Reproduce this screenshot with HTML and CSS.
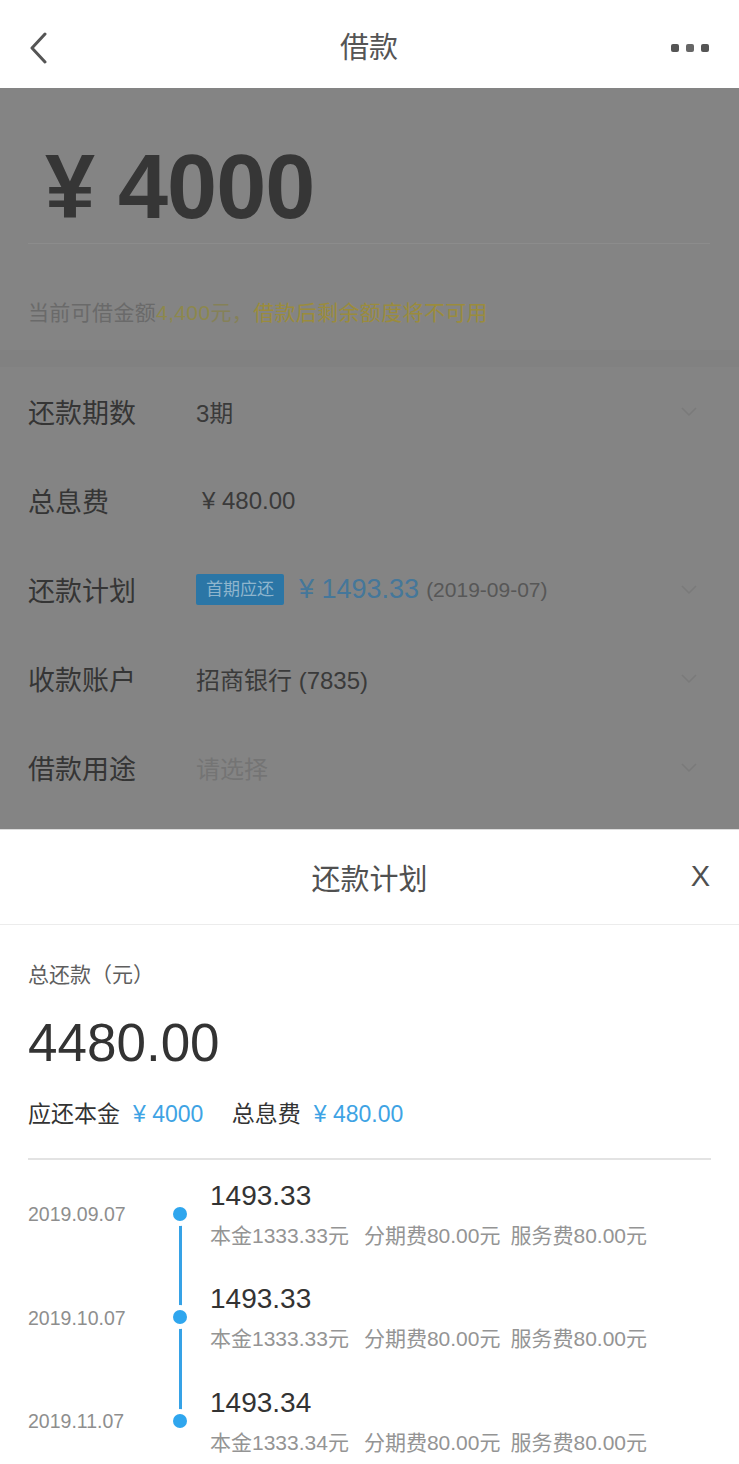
FILE: index.html
```html
<!DOCTYPE html>
<html lang="zh-CN">
<head>
<meta charset="utf-8">
<title>借款</title>
<link rel="stylesheet" href="styles.css">
</head>
<body>
<div class="page">
  <header class="nav">
    <svg class="nav-back" width="22" height="32" viewBox="0 0 22 32"><path d="M17 2 L4 16 L17 30" fill="none" stroke="#555" stroke-width="3" stroke-linecap="round" stroke-linejoin="round"/></svg>
    <div class="nav-title">借款</div>
    <svg class="nav-more" width="38" height="8" viewBox="0 0 38 8"><rect x="0" y="0" width="8" height="8" rx="2" fill="#555"/><rect x="15" y="0" width="8" height="8" rx="2" fill="#666"/><rect x="30" y="0" width="8" height="8" rx="2" fill="#555"/></svg>
  </header>

  <section class="dim">
    <div class="amount-sec">
      <div class="amount">¥ 4000</div>
      <div class="amount-line"></div>
      <div class="tip"><span class="tip-gray">当前可借金额</span><span class="tip-num">4,400</span><span class="tip-mid">元，</span><span class="tip-warn">借款后剩余额度将不可用</span></div>
    </div>
    <div class="band"></div>
    <div class="rows">
      <div class="row">
        <div class="row-label">还款期数</div>
        <div class="row-value">3期</div>
        <svg class="row-arrow" width="16" height="10" viewBox="0 0 16 10"><path d="M1 1 L8 8 L15 1" fill="none" stroke="#7a7a7a" stroke-width="1.5"/></svg>
      </div>
      <div class="row">
        <div class="row-label">总息费</div>
        <div class="row-value row-fee">¥ 480.00</div>
      </div>
      <div class="row">
        <div class="row-label">还款计划</div>
        <div class="row-value plan">
          <span class="badge">首期应还</span>
          <span class="plan-amt">¥ 1493.33</span>
          <span class="plan-date">(2019-09-07)</span>
        </div>
        <svg class="row-arrow" width="16" height="10" viewBox="0 0 16 10"><path d="M1 1 L8 8 L15 1" fill="none" stroke="#7a7a7a" stroke-width="1.5"/></svg>
      </div>
      <div class="row">
        <div class="row-label">收款账户</div>
        <div class="row-value">招商银行 (7835)</div>
        <svg class="row-arrow" width="16" height="10" viewBox="0 0 16 10"><path d="M1 1 L8 8 L15 1" fill="none" stroke="#7a7a7a" stroke-width="1.5"/></svg>
      </div>
      <div class="row">
        <div class="row-label">借款用途</div>
        <div class="row-value placeholder">请选择</div>
        <svg class="row-arrow" width="16" height="10" viewBox="0 0 16 10"><path d="M1 1 L8 8 L15 1" fill="none" stroke="#7a7a7a" stroke-width="1.5"/></svg>
      </div>
    </div>
  </section>

  <section class="sheet">
    <div class="sheet-head">
      <div class="sheet-title">还款计划</div>
      <div class="sheet-close">X</div>
    </div>
    <div class="sheet-body">
      <div class="total-label">总还款（元）</div>
      <div class="total">4480.00</div>
      <div class="summary">
        <span class="sum-label">应还本金</span><span class="sum-val">¥ 4000</span>
        <span class="sum-label sum-gap">总息费</span><span class="sum-val">¥ 480.00</span>
      </div>
      <div class="divider"></div>
      <div class="timeline">
        <div class="item first">
          <div class="date">2019.09.07</div>
          <div class="axis"><span class="dot"></span></div>
          <div class="content">
            <div class="pay">1493.33</div>
            <div class="detail"><span>本金1333.33元</span><span class="d2">分期费80.00元</span><span class="d3">服务费80.00元</span></div>
          </div>
        </div>
        <div class="item">
          <div class="date">2019.10.07</div>
          <div class="axis"><span class="dot"></span></div>
          <div class="content">
            <div class="pay">1493.33</div>
            <div class="detail"><span>本金1333.33元</span><span class="d2">分期费80.00元</span><span class="d3">服务费80.00元</span></div>
          </div>
        </div>
        <div class="item last">
          <div class="date">2019.11.07</div>
          <div class="axis"><span class="dot"></span></div>
          <div class="content">
            <div class="pay">1493.34</div>
            <div class="detail"><span>本金1333.34元</span><span class="d2">分期费80.00元</span><span class="d3">服务费80.00元</span></div>
          </div>
        </div>
      </div>
    </div>
  </section>
</div>
</body>
</html>
```

FILE: styles.css
```css
* { box-sizing: border-box; }
html, body {
  margin: 0;
  padding: 0;
  background: #fff;
}
body {
  font-family: "Liberation Sans", "Noto Sans CJK SC", sans-serif;
  width: 739px;
  height: 1464px;
  overflow: hidden;
}
.page {
  display: flex;
  flex-direction: column;
  width: 739px;
  height: 1464px;
}

/* nav */
.nav {
  height: 88px;
  flex: none;
  display: flex;
  align-items: center;
  justify-content: space-between;
  padding: 8px 30px 0 28px;
  background: #fff;
}
.nav-back { display: block; }
.nav-title {
  font-size: 29px;
  color: #555;
  line-height: 1;
  margin-left: 17px;
}
.nav-more { display: block; }

/* dimmed form */
.dim {
  flex: none;
  height: 741px;
  background: #848484;
  display: flex;
  flex-direction: column;
}
.amount-sec {
  height: 262px;
  flex: none;
  padding: 54px 29px 0 28px;
}
.amount {
  font-size: 90px;
  font-weight: bold;
  line-height: 1;
  letter-spacing: -1px;
  color: #363636;
  padding-left: 17px;
}
.amount-line {
  margin-top: 11px;
  height: 1px;
  background: #8c8c8c;
}
.tip {
  margin-top: 55px;
  font-size: 21px;
  line-height: 28px;
  letter-spacing: 0.35px;
  white-space: nowrap;
}
.tip-gray { color: #6a6a6a; }
.tip-num { color: #8d884c; }
.tip-mid { color: #858158; }
.tip-warn { color: #9b8c3c; }
.band {
  height: 17px;
  flex: none;
  background: #818181;
}
.rows {
  display: flex;
  flex-direction: column;
}
.row {
  height: 89px;
  display: flex;
  align-items: center;
  padding: 0 42px 0 28px;
}
.row-label {
  width: 168px;
  flex: none;
  font-size: 27px;
  color: #353535;
}
.row-value {
  flex: 1;
  font-size: 24px;
  color: #3a3a3a;
  white-space: nowrap;
}
.row-fee { padding-left: 6px; }
.placeholder { color: #747474; }
.row-arrow { flex: none; display: block; }
.plan {
  display: flex;
  align-items: center;
}
.badge {
  display: inline-block;
  background: #2b76a6;
  color: #8fb5cd;
  font-size: 17px;
  line-height: 31px;
  height: 31px;
  padding: 0 10px;
  border-radius: 2px;
}
.plan-amt {
  margin-left: 15px;
  font-size: 27px;
  color: #45779a;
}
.plan-date {
  margin-left: 7px;
  font-size: 21px;
  color: #575757;
}

/* sheet */
.sheet {
  flex: 1;
  background: #fff;
  border-top: 1px solid #dcdcdc;
  display: flex;
  flex-direction: column;
}
.sheet-head {
  height: 95px;
  flex: none;
  display: flex;
  align-items: center;
  justify-content: center;
  position: relative;
  border-bottom: 1px solid #ececec;
}
.sheet-title {
  font-size: 29px;
  color: #505050;
}
.sheet-close {
  position: absolute;
  right: 29px;
  top: 32px;
  font-size: 29px;
  color: #505050;
  line-height: 1;
}
.sheet-body {
  padding: 0 28px;
}
.total-label {
  margin-top: 36px;
  font-size: 21px;
  line-height: 28px;
  color: #5e5e5e;
}
.total {
  margin-top: 24px;
  font-size: 53px;
  line-height: 60px;
  color: #333;
}
.summary {
  margin-top: 26px;
  font-size: 23px;
  line-height: 30px;
  white-space: nowrap;
}
.sum-label { color: #333; }
.sum-val { color: #3ea3e4; margin-left: 13px; }
.sum-gap { margin-left: 22px; }
.divider {
  margin-top: 29px;
  height: 2px;
  background: #e3e3e3;
}

.timeline {
  margin-top: 3px;
  display: flex;
  flex-direction: column;
}
.item {
  height: 103.5px;
  flex: none;
  display: flex;
  align-items: center;
}
.date {
  width: 137px;
  flex: none;
  font-size: 19.5px;
  color: #8e8e8e;
}
.axis {
  width: 30px;
  height: 100%;
  flex: none;
  position: relative;
  display: flex;
  align-items: center;
  justify-content: center;
}
.axis::before {
  content: "";
  position: absolute;
  left: 13.5px;
  width: 3px;
  top: 0;
  bottom: 0;
  background: #36a2e6;
}
.item.first .axis::before { top: 50%; }
.item.last .axis::before { bottom: 50%; }
.dot {
  position: relative;
  width: 14px;
  height: 14px;
  border-radius: 50%;
  background: #2fa6ee;
  box-shadow: 0 0 0 5px #fff;
  margin-top: -2px;
}
.content {
  margin-left: 15px;
  display: flex;
  flex-direction: column;
  gap: 8px;
}
.pay {
  font-size: 28px;
  line-height: 34px;
  color: #333;
}
.detail {
  font-size: 21px;
  line-height: 30px;
  color: #949494;
  white-space: nowrap;
}
.d2 { margin-left: 15px; }
.d3 { margin-left: 10px; }
```
